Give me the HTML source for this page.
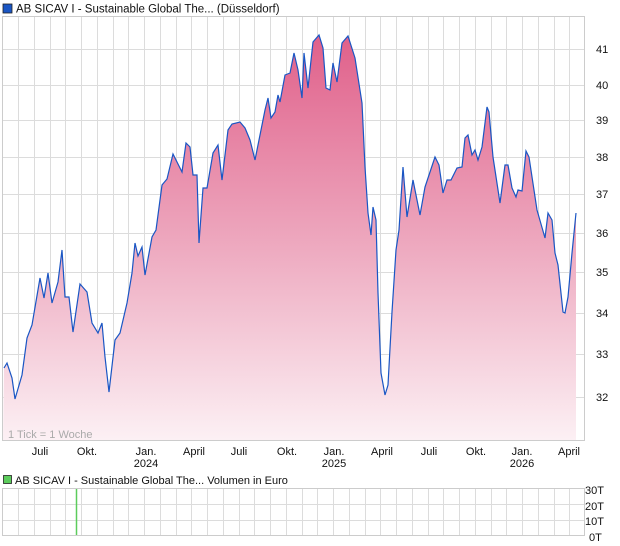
<!DOCTYPE html>
<html><head><meta charset="utf-8"><style>
body{margin:0;width:620px;height:546px;background:#fff;overflow:hidden;font-family:"Liberation Sans",sans-serif;}
svg{position:absolute;left:0;top:0}
</style></head><body>
<svg width="620" height="546" viewBox="0 0 620 546" font-family="Liberation Sans, sans-serif">
<defs><linearGradient id="g" gradientUnits="userSpaceOnUse" x1="0" y1="35" x2="0" y2="440">
<stop offset="0" stop-color="#e0608a"/><stop offset="0.5" stop-color="#eda6bd"/><stop offset="1" stop-color="#fcf0f4"/></linearGradient></defs>
<rect x="3" y="4" width="9" height="9" fill="#1a56c4" stroke="#222" stroke-width="0.8"/>
<text x="16" y="12.5" font-size="11.5" fill="#111">AB SICAV I - Sustainable Global The... (Düsseldorf)</text>
<g stroke="#dcdcdc" stroke-width="1">
<line x1="2" y1="16.5" x2="585" y2="16.5"/>
<line x1="2" y1="49.5" x2="585" y2="49.5"/><line x1="2" y1="85.5" x2="585" y2="85.5"/><line x1="2" y1="120.5" x2="585" y2="120.5"/><line x1="2" y1="157.5" x2="585" y2="157.5"/><line x1="2" y1="194.5" x2="585" y2="194.5"/><line x1="2" y1="233.5" x2="585" y2="233.5"/><line x1="2" y1="272.5" x2="585" y2="272.5"/><line x1="2" y1="313.5" x2="585" y2="313.5"/><line x1="2" y1="354.5" x2="585" y2="354.5"/><line x1="2" y1="397.5" x2="585" y2="397.5"/>
</g>
<g stroke="#dcdcdc" stroke-width="1" id="vg"></g>
<path fill="url(#g)" stroke="none" d="M3,440 L4,368 7,363 12,378 15,399 22,375 27,338 32,325 40,278 44,298 48,273 52,303 58,282 62,250 65,297 69,297 73,332 80,284 87,292 92,323 98,333 102,323 105,357 109,392 115,340 120,333 127,303 132,273 135,243 138,256 142,247 145,275 152,237 156,230 162,185 167,179 173,154 182,172 186,143 190,147 193,175 197,175 199,243 203,188 207,188 213,153 218,145 222,180 228,130 232,124 240,122 245,128 250,140 255,160 260,135 265,110 268,98 271,118 275,112 278,95 280,102 285,75 290,73 294,53 298,70 302,98 304,53 308,88 313,42 319,35 323,48 326,88 330,90 333,63 337,82 342,43 348,36 355,58 362,103 365,167 368,213 371,235 373,207 376,220 378,293 381,373 385,395 388,385 392,312 396,250 399,230 403,167 407,217 413,180 420,215 425,187 435,157 439,165 443,193 447,180 451,180 457,168 462,167 465,138 468,135 472,155 475,150 478,160 482,147 487,107 489,112 493,157 500,203 505,165 508,165 512,188 516,197 518,190 522,191 526,151 529,157 537,210 545,238 548,213 552,220 555,253 558,265 563,312 565,313 568,297 572,253 576,213 L576,440 Z"/>
<polyline fill="none" stroke="#1a56c4" stroke-width="1.2" points="4,368 7,363 12,378 15,399 22,375 27,338 32,325 40,278 44,298 48,273 52,303 58,282 62,250 65,297 69,297 73,332 80,284 87,292 92,323 98,333 102,323 105,357 109,392 115,340 120,333 127,303 132,273 135,243 138,256 142,247 145,275 152,237 156,230 162,185 167,179 173,154 182,172 186,143 190,147 193,175 197,175 199,243 203,188 207,188 213,153 218,145 222,180 228,130 232,124 240,122 245,128 250,140 255,160 260,135 265,110 268,98 271,118 275,112 278,95 280,102 285,75 290,73 294,53 298,70 302,98 304,53 308,88 313,42 319,35 323,48 326,88 330,90 333,63 337,82 342,43 348,36 355,58 362,103 365,167 368,213 371,235 373,207 376,220 378,293 381,373 385,395 388,385 392,312 396,250 399,230 403,167 407,217 413,180 420,215 425,187 435,157 439,165 443,193 447,180 451,180 457,168 462,167 465,138 468,135 472,155 475,150 478,160 482,147 487,107 489,112 493,157 500,203 505,165 508,165 512,188 516,197 518,190 522,191 526,151 529,157 537,210 545,238 548,213 552,220 555,253 558,265 563,312 565,313 568,297 572,253 576,213"/>
<rect x="2.5" y="16.5" width="582" height="424" fill="none" stroke="#ccc"/>
<text x="8" y="438" font-size="11" fill="#aaa">1 Tick = 1 Woche</text>
<g font-size="11" fill="#111">
<text x="596" y="53">41</text><text x="596" y="89">40</text><text x="596" y="124">39</text><text x="596" y="161">38</text><text x="596" y="198">37</text><text x="596" y="237">36</text><text x="596" y="276">35</text><text x="596" y="317">34</text><text x="596" y="358">33</text><text x="596" y="401">32</text>
</g>
<g font-size="11" fill="#111" text-anchor="middle">
<text x="40" y="455">Juli</text><text x="87" y="455">Okt.</text><text x="146" y="455">Jan.</text><text x="146" y="467">2024</text><text x="194" y="455">April</text><text x="239" y="455">Juli</text><text x="287" y="455">Okt.</text><text x="334" y="455">Jan.</text><text x="334" y="467">2025</text><text x="382" y="455">April</text><text x="429" y="455">Juli</text><text x="476" y="455">Okt.</text><text x="522" y="455">Jan.</text><text x="522" y="467">2026</text><text x="569" y="455">April</text>
</g>
<rect x="3.5" y="475.5" width="8" height="8" fill="#5ccc5c" stroke="#222" stroke-width="0.8"/>
<text x="15" y="484" font-size="11" fill="#111">AB SICAV I - Sustainable Global The... Volumen in Euro</text>
<g stroke="#dcdcdc"><line x1="2" y1="488.5" x2="585" y2="488.5"/><line x1="2" y1="504.5" x2="585" y2="504.5"/><line x1="2" y1="520.5" x2="585" y2="520.5"/><line x1="2" y1="535.5" x2="585" y2="535.5"/></g>
<g stroke="#dcdcdc" id="vg2"></g>
<rect x="2.5" y="488.5" width="582" height="47" fill="none" stroke="#ccc"/>
<line x1="76.5" y1="489" x2="76.5" y2="535" stroke="#5ccc5c" stroke-width="1.5"/>
<g font-size="11" fill="#111"><text x="585" y="494">30T</text><text x="585" y="510">20T</text><text x="585" y="525">10T</text><text x="589" y="541">0T</text></g>
</svg>
<script>
var ns="http://www.w3.org/2000/svg",a=document.getElementById("vg"),b=document.getElementById("vg2");
for(var i=0;i<36;i++){var x=Math.round(18+i*15.75)+0.5;if(x>584)break;
[[a,16,440],[b,488,535]].forEach(function(p){var l=document.createElementNS(ns,"line");l.setAttribute("x1",x);l.setAttribute("x2",x);l.setAttribute("y1",p[1]);l.setAttribute("y2",p[2]);p[0].appendChild(l);});}
</script>
</body></html>
